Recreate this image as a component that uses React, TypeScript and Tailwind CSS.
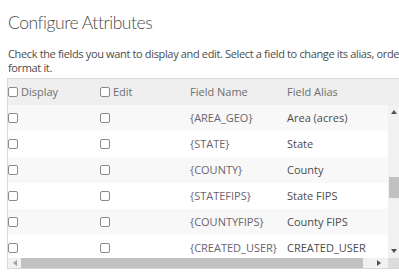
import React from 'react';

const rows = [
  { name: '{AREA_GEO}', alias: 'Area (acres)' },
  { name: '{STATE}', alias: 'State' },
  { name: '{COUNTY}', alias: 'County' },
  { name: '{STATEFIPS}', alias: 'State FIPS' },
  { name: '{COUNTYFIPS}', alias: 'County FIPS' },
  { name: '{CREATED_USER}', alias: 'CREATED_USER' },
];

const Box = () => (
  <span className="inline-block w-[10px] h-[10px] border border-[#8a8a8a] rounded-[2px] bg-white shrink-0" />
);

const App = () => {
  return (
    <div className="w-[399px] h-[276px] overflow-hidden bg-white font-['Open_Sans',sans-serif]">
      <div className="w-[480px] pl-2 pt-[10px]">
        <h1 className="font-['Lato',sans-serif] text-[17.5px] font-light text-[#4c4c4c] leading-[26px] tracking-[-0.45px]">
          Configure Attributes
        </h1>
        <p className="mt-[11px] w-[458px] text-[11px] leading-[14px] text-[#4c4c4c] tracking-[-0.35px]">
          Check the fields you want to display and edit. Select a field to change its alias, order it, and format it.
        </p>

        {/* table */}
        <div className="mt-[3px] -ml-px w-[400px] border-t border-l border-b border-[#d9d9d9] text-[11px]">
          <div className="flex items-center h-[26px] bg-[#efefef] text-[#6e6e6e]">
            <div className="w-[92px] flex items-center gap-[3px]">
              <Box />
              <span>Display</span>
            </div>
            <div className="w-[90px] flex items-center gap-[3px]">
              <Box />
              <span>Edit</span>
            </div>
            <div className="w-[97px]">Field Name</div>
            <div>Field Alias</div>
          </div>

          <div className="grid grid-cols-[380px_12px] grid-rows-[153px_10px]">
            <div className="overflow-hidden">
              {rows.map((r, i) => (
                <div
                  key={r.name}
                  className={`flex items-center h-[26px] ${i % 2 === 0 ? 'bg-[#f8f8f8]' : 'bg-white'}`}
                >
                  <div className="w-[92px] flex items-center"><Box /></div>
                  <div className="w-[90px] flex items-center"><Box /></div>
                  <div className="w-[97px] text-[#6b6470] whitespace-nowrap">{r.name}</div>
                  <div className="text-[#4c4c4c] whitespace-nowrap">{r.alias}</div>
                </div>
              ))}
            </div>

            {/* vertical scrollbar */}
            <div className="bg-[#f1f1f1] flex flex-col items-center">
              <svg width="6" height="4" viewBox="0 0 6 4" className="mt-[5px]">
                <polygon points="3,0 6,4 0,4" fill="#505050" />
              </svg>
              <div className="mt-[63px] w-[11px] h-[21px] bg-[#c1c1c1]" />
              <div className="flex-1" />
              <svg width="6" height="4" viewBox="0 0 6 4" className="mb-[5px]">
                <polygon points="0,0 6,0 3,4" fill="#505050" />
              </svg>
            </div>

            {/* horizontal scrollbar */}
            <div className="bg-[#f1f1f1] flex items-center">
              <svg width="4" height="6" viewBox="0 0 4 6" className="ml-[5px]">
                <polygon points="0,3 4,0 4,6" fill="#a0a0a0" />
              </svg>
              <div className="ml-[4px] w-[342px] h-[10px] bg-[#c1c1c1]" />
              <svg width="4" height="6" viewBox="0 0 4 6" className="ml-[14px]">
                <polygon points="0,0 4,3 0,6" fill="#505050" />
              </svg>
            </div>
            <div className="bg-[#dcdcdc]" />
          </div>
        </div>
      </div>
    </div>
  );
};

export default App;
